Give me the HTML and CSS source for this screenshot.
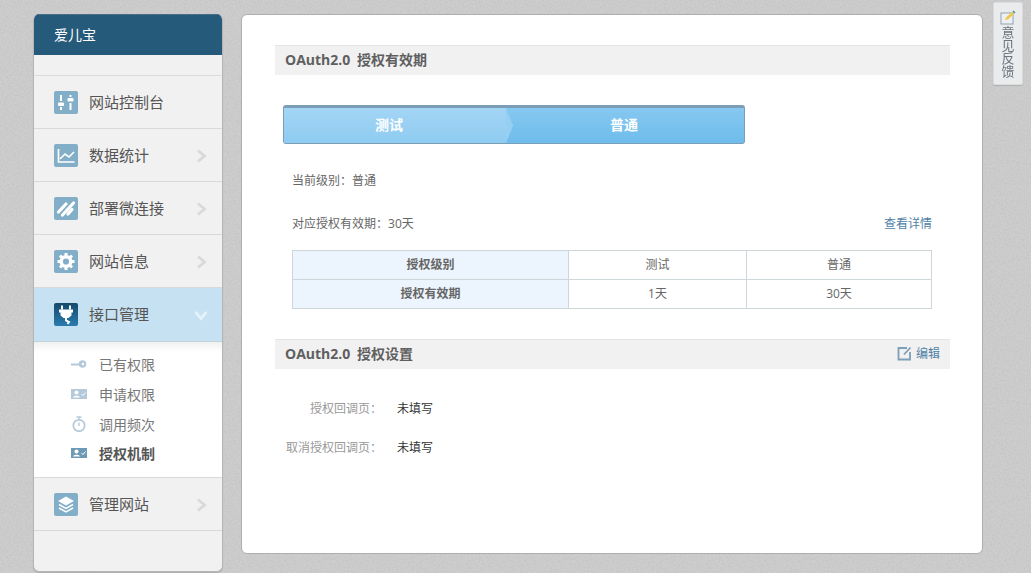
FILE: index.html
```html
<!DOCTYPE html>
<html lang="zh">
<head>
<meta charset="utf-8">
<title>OAuth2.0 授权</title>
<link rel="stylesheet" href="styles.css">
</head>
<body>
<div class="page">
  <aside class="sidebar">
    <div class="brand">爱儿宝</div>
    <nav class="nav">
      <a class="nav-item">
        <span class="nav-icon"><svg viewBox="0 0 24 23"><g fill="#fff"><rect x="6" y="4" width="2" height="6"/><rect x="6" y="16" width="2" height="3"/><rect x="15.500" y="4" width="2" height="2"/><rect x="15.500" y="12" width="2" height="7"/><rect x="4" y="11.500" width="6" height="3.500" rx="1"/><rect x="13.500" y="7" width="6" height="3.500" rx="1"/></g></svg></span>
        <span class="nav-label">网站控制台</span>
      </a>
      <a class="nav-item">
        <span class="nav-icon"><svg viewBox="0 0 24 23"><path d="M4.500 5v13h16M6 15l5-5 4 3 5-5" fill="none" stroke="#fff" stroke-width="1.700"/></svg></span>
        <span class="nav-label">数据统计</span>
        <svg class="chev" viewBox="0 0 11 14"><path d="M2 1.500 8.500 7 2 12.500" fill="none" stroke="#d9d9d9" stroke-width="2.800"/></svg>
      </a>
      <a class="nav-item">
        <span class="nav-icon"><svg viewBox="0 0 24 23"><path d="M4.500 15 12 7M8.500 18 19.500 6M14 17l4-4.500" fill="none" stroke="#fff" stroke-width="3.200" stroke-linecap="round"/></svg></span>
        <span class="nav-label">部署微连接</span>
        <svg class="chev" viewBox="0 0 11 14"><path d="M2 1.500 8.500 7 2 12.500" fill="none" stroke="#d9d9d9" stroke-width="2.800"/></svg>
      </a>
      <a class="nav-item">
        <span class="nav-icon"><svg viewBox="0 0 24 23"><circle cx="12" cy="11.500" r="4.800" fill="none" stroke="#fff" stroke-width="3.400"/><path d="M12 3v3M12 17v3M3.500 11.500h3M17.500 11.500h3M6 5.500l2 2M16 15.500l2 2M18 5.500l-2 2M8 15.500l-2 2" stroke="#fff" stroke-width="3"/></svg></span>
        <span class="nav-label">网站信息</span>
        <svg class="chev" viewBox="0 0 11 14"><path d="M2 1.500 8.500 7 2 12.500" fill="none" stroke="#d9d9d9" stroke-width="2.800"/></svg>
      </a>
      <a class="nav-item active">
        <span class="nav-icon"><svg viewBox="0 0 24 23"><path d="M8 2.500v4M16 2.500v4" stroke="#fff" stroke-width="2"/><path d="M5 6.500h14v3h-1.500v3l-3 2.500h-5l-3-2.500v-3H5z" fill="#fff"/><path d="M12 15v2.500l3 1.500-1.500 2" fill="none" stroke="#fff" stroke-width="2"/></svg></span>
        <span class="nav-label">接口管理</span>
        <svg class="chev down" viewBox="0 0 14 11"><path d="M1.500 2 7 8.500 12.500 2" fill="none" stroke="#e6f2f9" stroke-width="2.800"/></svg>
      </a>
      <ul class="subnav">
        <li class="sub-item">
          <svg class="sub-icon" viewBox="0 0 16 12"><path d="M0 6.500h9" stroke="#b4c9d9" stroke-width="2"/><circle cx="11.500" cy="6" r="3.800" fill="#b4c9d9"/><circle cx="12" cy="6" r="1.200" fill="#fff"/></svg>
          已有权限
        </li>
        <li class="sub-item">
          <svg class="sub-icon" viewBox="0 0 16 12"><rect y="1" width="16" height="10" fill="#b4c9d9"/><circle cx="5.500" cy="4.500" r="2" fill="#fff"/><path d="M2 9.500c.5-2.500 6.500-2.500 7 0z" fill="#fff"/><path d="m10.500 6 1.500 1.500 2.500-3" fill="none" stroke="#fff"/></svg>
          申请权限
        </li>
        <li class="sub-item">
          <svg class="sub-icon tall" viewBox="0 0 16 16"><circle cx="8" cy="9.500" r="5.700" fill="none" stroke="#b4c9d9" stroke-width="1.700"/><path d="M5.500 1h5M8 1v3M8 6.500v3.500" stroke="#b4c9d9" stroke-width="1.400"/></svg>
          调用频次
        </li>
        <li class="sub-item current">
          <svg class="sub-icon" viewBox="0 0 16 12"><rect y="1" width="16" height="10" fill="#6e9ab5"/><circle cx="5.500" cy="4.500" r="2" fill="#fff"/><path d="M2 9.500c.5-2.500 6.500-2.500 7 0z" fill="#fff"/><path d="m10.500 6 1.500 1.500 2.500-3" fill="none" stroke="#fff"/></svg>
          授权机制
        </li>
      </ul>
      <a class="nav-item after-sub">
        <span class="nav-icon"><svg viewBox="0 0 24 23"><path d="M12 3.500 20 8l-8 4.500L4 8z" fill="#fff"/><path d="m5 11.500 7 4 7-4M5 15l7 4 7-4" fill="none" stroke="#fff" stroke-width="1.500"/></svg></span>
        <span class="nav-label">管理网站</span>
        <svg class="chev" viewBox="0 0 11 14"><path d="M2 1.500 8.500 7 2 12.500" fill="none" stroke="#d9d9d9" stroke-width="2.800"/></svg>
      </a>
    </nav>
  </aside>

  <main class="card">
    <h2 class="section-title"><span>OAuth2.0 授权有效期</span></h2>
    <div class="steps">
      <div class="step done">测试<svg class="step-tip" viewBox="0 0 9 37" preserveAspectRatio="none"><path d="M0 0 8 18.500 0 37z" fill="#96cff2"/></svg></div>
      <div class="step now">普通</div>
    </div>
    <p class="level">当前级别<span class="colon">：</span>普通</p>
    <div class="validity">
      <span>对应授权有效期<span class="colon">：</span>30天</span>
      <a class="link">查看详情</a>
    </div>
    <table class="grid">
      <tr><th>授权级别</th><td class="col-a">测试</td><td>普通</td></tr>
      <tr><th>授权有效期</th><td class="col-a">1天</td><td>30天</td></tr>
    </table>
    <h2 class="section-title second">
      <span>OAuth2.0 授权设置</span>
      <a class="edit link"><svg viewBox="0 0 15 15"><path d="M10 2H1.500v11.500H13V6" fill="none" stroke="#7d9fb8" stroke-width="1.800"/><path d="m7 8.500 6.500-7" stroke="#7d9fb8" stroke-width="1.800"/></svg>编辑</a>
    </h2>
    <dl class="settings">
      <div class="setting"><dt>授权回调页<span class="colon">：</span></dt><dd>未填写</dd></div>
      <div class="setting"><dt>取消授权回调页<span class="colon">：</span></dt><dd>未填写</dd></div>
    </dl>
  </main>
</div>

<aside class="feedback">
  <svg viewBox="0 0 16 16"><rect x="1" y="3" width="12" height="11" fill="#eef1f3" stroke="#8fa3b3"/><path d="m5 10 1-2.500L12 2l2 2-6 5.500z" fill="#f0c84c"/><path d="m12.500 1.500 2 2 1-1-2-2z" fill="#4a8f7a"/></svg>
  <span>意见反馈</span>
</aside>
</body>
</html>
```

FILE: styles.css
```css
* { box-sizing: border-box; }

html, body { margin: 0; height: 100%; overflow: hidden; }

body {
  background-color: #cdcdcd;
  background-image: url("data:image/svg+xml,%3Csvg xmlns='http://www.w3.org/2000/svg' width='240' height='240'%3E%3Cfilter id='n'%3E%3CfeTurbulence type='fractalNoise' baseFrequency='.55' numOctaves='2' stitchTiles='stitch'/%3E%3CfeColorMatrix values='0 0 0 0 .5 0 0 0 0 .5 0 0 0 0 .5 1.100 0 0 0 -.42'/%3E%3C/filter%3E%3Crect width='240' height='240' filter='url(%23n)'/%3E%3C/svg%3E");
  font-family: "Open Sans", "Noto Sans CJK SC", sans-serif;
  font-size: 12px;
  color: #666;
}

.page {
  display: flex;
  align-items: flex-start;
  gap: 18px;
  padding: 14px 0 0 33px;
}

.colon { font-family: "Noto Sans CJK TC", sans-serif; line-height: 1; }

/* Sidebar */
.sidebar {
  flex: none;
  width: 190px;
  height: 558px;
  background: #f1f1f1;
  border: 1px solid #b5b5b5;
  border-top: 0;
  border-radius: 6px;
  box-shadow: 0 1px 1px rgba(0,0,0,.15);
  overflow: hidden;
}

.brand {
  height: 41px;
  padding-left: 20px;
  background: #265a7b;
  border-top: 1px solid #4a6d85;
  color: #fff;
  font-size: 14px;
  line-height: 40px;
}

.nav {
  margin-top: 20px;
  border-top: 1px solid #dcdcdc;
}

.nav-item {
  display: flex;
  align-items: center;
  height: 53px;
  padding-left: 20px;
  border-bottom: 1px solid #d9d9d9;
  color: #555;
  font-size: 15px;
}

.nav-icon {
  flex: none;
  width: 24px;
  height: 23px;
  margin-right: 11px;
  background: #82aec8;
  border-radius: 2px;
}

.nav-icon svg { display: block; width: 24px; height: 23px; }

.nav-label { flex: 1; padding-bottom: 2px; }

.chev { flex: none; width: 11px; height: 14px; margin: 2px 15px 0 0; }
.chev.down { width: 14px; height: 11px; margin-right: 14px; }

.nav-item.active {
  height: 54px;
  background: #c6e1f1;
  border-bottom: 1px solid #c3d3de;
}

.active .nav-icon {
  background: linear-gradient(#14496b, #2a7cae);
}

.subnav {
  list-style: none;
  margin: 0;
  padding: 7px 0 8px;
  height: 136px;
  background: linear-gradient(#f1f1f1, #fff 10px);
  border-bottom: 1px solid #d9d9d9;
}

.sub-item {
  display: flex;
  align-items: center;
  height: 30px;
  padding-left: 37px;
  font-size: 14px;
  color: #777;
}

.sub-icon { flex: none; width: 16px; height: 12px; margin-right: 12px; }
.sub-icon.tall { height: 16px; }

.sub-item.current { margin-top: -1px; font-weight: 700; color: #555; }

/* Main card */
.card {
  flex: none;
  width: 742px;
  height: 540px;
  padding: 30px 32px 0 33px;
  background: #fff;
  border: 1px solid #aeaeae;
  border-radius: 6px;
}

.section-title {
  display: flex;
  justify-content: space-between;
  align-items: center;
  height: 30px;
  margin: 0;
  padding: 0 10px 3px;
  background: #f1f1f1;
  border-top: 1px solid #e4e4e4;
  color: #5f5f5f;
  font-size: 14px;
  font-weight: 700;
  word-spacing: 3px;
}

.section-title.second { margin-top: 30px; }

.steps {
  display: flex;
  width: 462px;
  height: 39px;
  margin: 30px 0 0 8px;
  background: linear-gradient(#86c8f0, #6ebcec);
  border: 1px solid #7b9db5;
  border-top-width: 3px;
  border-radius: 3px;
  color: #fff;
  font-size: 14px;
  font-weight: 700;
  line-height: 33px;
  text-align: center;
}

.step { position: relative; }

.step.done {
  width: 222px;
  padding-right: 12px;
  background: linear-gradient(#a3d5f5, #8fcbf1);
}

.step.now { flex: 1; padding-right: 2px; }

.step-tip {
  position: absolute;
  top: 0;
  left: 100%;
  width: 8px;
  height: 100%;
}

.level {
  margin: 29px 0 0 17px;
  line-height: 16px;
}

.validity {
  display: flex;
  justify-content: space-between;
  margin: 27px 18px 0 17px;
  line-height: 16px;
}

.link { color: #4f81a6; }

.grid {
  width: 640px;
  margin: 18px 0 0 17px;
  border-collapse: collapse;
  table-layout: fixed;
  text-align: center;
}

.grid th, .grid td {
  height: 29px;
  padding: 0 0 2px;
  border: 1px solid #cfd6da;
  font-weight: 400;
}

.grid th {
  width: 276px;
  background: #ecf5fd;
  font-weight: 700;
  color: #666;
}

.grid .col-a { width: 178px; }

.edit {
  display: flex;
  align-items: center;
  gap: 4px;
  font-size: 12px;
  font-weight: 400;
}

.edit svg { width: 15px; height: 15px; }

.settings { margin: 31px 0 0; }

.setting {
  display: flex;
  align-items: center;
  height: 16px;
  margin-bottom: 23px;
}

.setting dt {
  width: 107px;
  color: #999;
  text-align: right;
  white-space: nowrap;
}

.setting dd {
  margin: 0 0 0 15px;
  color: #333;
}

/* Feedback tab */
.feedback {
  position: fixed;
  top: 2px;
  left: 993px;
  width: 30px;
  height: 83px;
  padding-top: 7px;
  background: #e9ebec;
  border: 1px solid #dcdcdc;
  border-radius: 2px;
  box-shadow: 0 1px 1px rgba(0,0,0,.12);
  color: #6b7680;
  font-size: 13px;
  line-height: 13px;
  text-align: center;
}

.feedback svg { display: block; width: 16px; height: 16px; margin: 0 auto; }
.feedback span { display: block; width: 14px; margin: 0 auto; }
```
